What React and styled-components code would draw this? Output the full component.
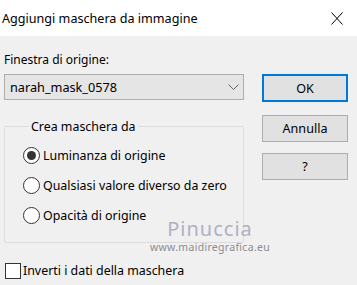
import React from "react";
import styled, { createGlobalStyle } from "styled-components";

const Global = createGlobalStyle`
  html, body { margin: 0; padding: 0; background: #f0f0f0; }
  body { font-family: "Noto Sans", "Open Sans", sans-serif; color: #000; }
`;

const Dialog = styled.div`
  width: 357px;
  height: 285px;
  background: #f0f0f0;
  position: relative;
  overflow: hidden;
`;

const TitleBar = styled.div`
  height: 36px;
  background: #fff;
  display: flex;
  align-items: center;
  justify-content: space-between;
  padding: 0 14px 0 2px;
  font-size: 12.6px;
`;

const Body = styled.div`
  display: flex;
  padding: 15px 9px 0 4px;
  gap: 18px;
`;

const Left = styled.div`
  width: 240px;
  display: flex;
  flex-direction: column;
`;

const Label = styled.div`
  font-size: 12px;
  line-height: 18px;
  margin-bottom: 5px;
`;

const Select = styled.div`
  height: 24px;
  border: 1px solid #adadad;
  background: #e5e5e5;
  display: flex;
  align-items: center;
  justify-content: space-between;
  padding: 0 4px 0 5px;
  font-size: 12.7px;
`;

const Group = styled.fieldset`
  margin: 18px 0 0 0;
  padding: 9px 0 0 18px;
  height: 114px;
  border: 1px solid #dcdcdc;
  border-radius: 2px;
  display: flex;
  flex-direction: column;
  gap: 8px;
  legend {
    font-size: 12.4px;
    padding: 0 2px;
    margin-left: 6px;
  }
`;

const Option = styled.label`
  display: flex;
  align-items: center;
  gap: 3px;
  font-size: 12.4px;
  height: 22px;
`;

const Radio = styled.span`
  width: 15px;
  height: 15px;
  border-radius: 50%;
  border: 1px solid #333;
  background: #fff;
  display: flex;
  align-items: center;
  justify-content: center;
  &::after {
    content: "";
    width: 9px;
    height: 9px;
    border-radius: 50%;
    background: ${(p) => (p.$checked ? "#333" : "transparent")};
  }
`;

const Buttons = styled.div`
  display: flex;
  flex-direction: column;
  gap: 11px;
  margin-top: 23px;
`;

const Button = styled.div`
  width: ${(p) => (p.$primary ? "82px" : "84px")};
  height: ${(p) => (p.$primary ? "24px" : "25px")};
  border: ${(p) => (p.$primary ? "2px solid #0078d7" : "1px solid #adadad")};
  background: #e1e1e1;
  display: flex;
  align-items: center;
  justify-content: center;
  font-size: 12.6px;
  margin-bottom: ${(p) => (p.$primary ? "2px" : "0")};
`;

const CheckRow = styled.label`
  display: flex;
  align-items: center;
  gap: 2px;
  font-size: 12.4px;
  padding: 19px 0 0 5px;
`;

const Box = styled.span`
  width: 14px;
  height: 14px;
  border: 1px solid #333;
  background: #fff;
`;

const Watermark = styled.div`
  position: absolute;
  left: 146px;
  top: 219px;
  width: 128px;
  text-align: center;
  color: #b0b0c2;
  line-height: 1;
  .name { font-size: 20px; letter-spacing: 1px; }
  .url { font-size: 10.5px; margin-top: 3px; color: #8c8c94; letter-spacing: 0.3px; }
`;

export default function App() {
  return (
    <Dialog>
      <Global />
      <TitleBar>
        <span>Aggiungi maschera da immagine</span>
        <svg width="12" height="13" viewBox="0 0 12 13">
          <path d="M0.5 0.5L11.5 12.5M11.5 0.5L0.5 12.5" stroke="#000" strokeWidth="1" />
        </svg>
      </TitleBar>
      <Body>
        <Left>
          <Label>Finestra di origine:</Label>
          <Select>
            <span>narah_mask_0578</span>
            <svg width="11" height="6" viewBox="0 0 11 6">
              <path d="M0.5 0.5L5.5 5.5L10.5 0.5" stroke="#666" fill="none" />
            </svg>
          </Select>
          <Group>
            <legend>Crea maschera da</legend>
            <Option><Radio $checked />Luminanza di origine</Option>
            <Option><Radio />Qualsiasi valore diverso da zero</Option>
            <Option><Radio />Opacità di origine</Option>
          </Group>
        </Left>
        <Buttons>
          <Button $primary>OK</Button>
          <Button>Annulla</Button>
          <Button>?</Button>
        </Buttons>
      </Body>
      <CheckRow><Box />Inverti i dati della maschera</CheckRow>
      <Watermark>
        <div className="name">Pinuccia</div>
        <div className="url">www.maidiregrafica.eu</div>
      </Watermark>
    </Dialog>
  );
}
